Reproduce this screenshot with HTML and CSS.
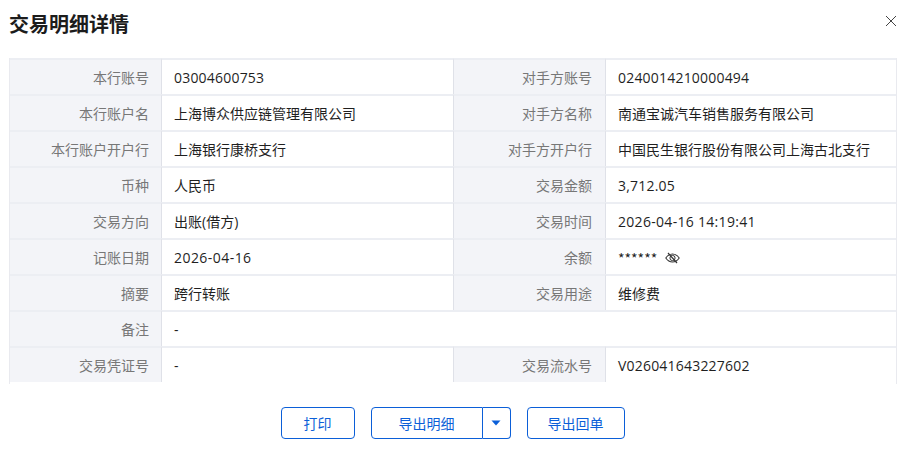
FILE: index.html
```html
<!DOCTYPE html>
<html lang="zh-CN">
<head>
<meta charset="utf-8">
<title>交易明细详情</title>
<link rel="stylesheet" href="styles.css">
</head>
<body>
<div class="dialog">
  <header class="head">
    <h1 class="title">交易明细详情</h1>
    <svg class="close" width="12" height="12" viewBox="0 0 12 12"><path d="M1 1L11 11M11 1L1 11" stroke="#444" stroke-width="1" fill="none"/></svg>
  </header>
  <div class="grid">
    <div class="k">本行账号</div><div class="v num">03004600753</div><div class="k mid">对手方账号</div><div class="v num">0240014210000494</div>
    <div class="k">本行账户名</div><div class="v">上海博众供应链管理有限公司</div><div class="k mid">对手方名称</div><div class="v">南通宝诚汽车销售服务有限公司</div>
    <div class="k">本行账户开户行</div><div class="v">上海银行康桥支行</div><div class="k mid">对手方开户行</div><div class="v">中国民生银行股份有限公司上海古北支行</div>
    <div class="k">币种</div><div class="v">人民币</div><div class="k mid">交易金额</div><div class="v num">3,712.05</div>
    <div class="k">交易方向</div><div class="v">出账(借方)</div><div class="k mid">交易时间</div><div class="v num time">2026-04-16 14:19:41</div>
    <div class="k">记账日期</div><div class="v num date">2026-04-16</div><div class="k mid">余额</div><div class="v num"><span class="stars">******</span>
      <svg class="eye" width="15" height="12" viewBox="0 0 15 12"><path d="M0.8 6C2.6 3.3 4.8 2 7.5 2S12.4 3.3 14.2 6C12.4 8.7 10.2 10 7.5 10S2.6 8.7 0.8 6Z" stroke="#333" stroke-width="1.1" fill="none"/><circle cx="7.5" cy="6" r="2.6" stroke="#333" fill="none"/><path d="M3 1L12 11" stroke="#333" stroke-width="1.2"/></svg></div>
    <div class="k">摘要</div><div class="v">跨行转账</div><div class="k mid">交易用途</div><div class="v">维修费</div>
    <div class="k">备注</div><div class="v wide">-</div>
    <div class="k">交易凭证号</div><div class="v num">-</div><div class="k mid">交易流水号</div><div class="v num">V026041643227602</div>
  </div>
  <footer class="foot">
    <button class="btn print">打印</button>
    <div class="split">
      <button class="btn main">导出明细</button>
      <button class="btn arrow"><svg width="10" height="6" viewBox="0 0 10 6"><path d="M0.5 0.5H9.5L5 5.5Z" fill="#0b5fd8"/></svg></button>
    </div>
    <button class="btn receipt">导出回单</button>
  </footer>
</div>
</body>
</html>
```
FILE: styles.css
```css
* { box-sizing: border-box; }
html, body { margin: 0; height: 100%; background: #fff; }
body { font-family: "Open Sans", "Noto Sans CJK SC", sans-serif; font-size: 14px; color: #1f1f1f; }
.dialog { width: 905px; height: 452px; padding: 0 8px 0 9px; overflow: hidden; }
.head { height: 58px; display: flex; justify-content: space-between; align-items: flex-start; padding: 15px 0 0 0; }
.title { margin: -1px 0 0; font-size: 20px; line-height: 20px; font-weight: 700; color: #1c1c1c; font-family: "Noto Sans CJK SC", sans-serif; }
.grid { display: grid; grid-template-columns: 152px 291px 153px 1fr; grid-auto-rows: 36px; border-left: 1px solid #e9eaef; border-right: 1px solid #e9eaef; height: 326px; }
.k, .v { border-top: 2px solid #eceef3; padding-top: 2px; display: flex; align-items: center; line-height: 20px; }
.k { background: #f3f4f8; color: #777; justify-content: flex-end; padding-right: 12px; border-right: 1px solid #dfe1e8; }
.mid { border-left: 1px solid #dfe1e8; padding-right: 13px; }
.v { padding-left: 12px; color: #1f1f1f; }
.num { letter-spacing: 0.2px; }
.date { letter-spacing: 0.45px; }
.time { letter-spacing: 0.3px; }
.stars { font-family: "Noto Sans CJK SC", sans-serif; font-size: 14px; letter-spacing: 0; }
.wide { grid-column: span 3; }
.eye { margin-left: 8px; }
.foot { display: flex; justify-content: center; gap: 16px; padding-top: 23px; padding-right: 1px; }
.btn { height: 32px; background: #fff; border: 1px solid #0b5fd8; border-radius: 4px; color: #0b5fd8; font: inherit; font-size: 14px; padding: 0; }
.print { width: 74px; }
.receipt { width: 98px; }
.split { display: flex; }
.main { width: 112px; border-radius: 4px 0 0 4px; }
.arrow { width: 28px; border-left: none; border-radius: 0 4px 4px 0; display: flex; align-items: center; justify-content: center; }
```
